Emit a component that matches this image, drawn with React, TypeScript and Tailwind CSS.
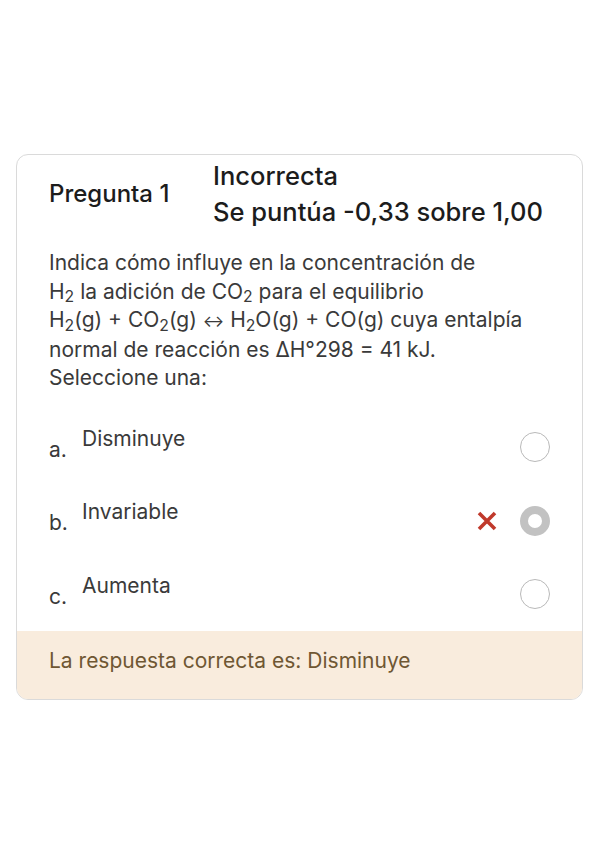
const font = { fontFamily: 'Inter, "Noto Sans", sans-serif' }

function Radio({ checked }: { readonly checked?: boolean }) {
  if (checked) {
    return <span className="block h-[30px] w-[30px] rounded-full border-[8px] border-[#c2c2c2] bg-white" />
  }
  return <span className="block h-[30px] w-[30px] rounded-full border-[1.5px] border-[#b9b9b9] bg-white" />
}

function WrongMark() {
  return (
    <svg width="22" height="22" viewBox="0 0 22 22" className="text-[#c0392b]">
      <path d="M3 3 L19 19 M19 3 L3 19" stroke="currentColor" strokeWidth="3.6" strokeLinecap="butt" />
    </svg>
  )
}

const options = [
  { letter: 'a.', label: 'Disminuye' },
  { letter: 'b.', label: 'Invariable', picked: true },
  { letter: 'c.', label: 'Aumenta' },
]

export default function App() {
  return (
    <div className="min-h-[848px] bg-white pt-[154px]" style={font}>
      <div className="mx-4 overflow-hidden rounded-xl border border-[#dadada] bg-white">
        {/* Header */}
        <div className="flex items-center px-8 pt-[3px]">
          <div className="w-[164px] text-[24px] font-medium text-[#1c1c1c]">Pregunta 1</div>
          <div className="text-[25.5px] font-medium leading-[36px] text-[#1c1c1c]">
            <div>Incorrecta</div>
            <div>Se puntúa -0,33 sobre 1,00</div>
          </div>
        </div>

        {/* Question */}
        <div className="mt-[19px] px-8 text-[21px] leading-[28.5px] text-[#3a3a3a]">
          <p>
            Indica cómo influye en la concentración de
            <br />
            H<sub>2</sub> la adición de CO<sub>2</sub> para el equilibrio
            <br />
            H<sub>2</sub>(g) + CO<sub>2</sub>(g) <span className="text-[16px]">↔</span> H<sub>2</sub>O(g) + CO(g) cuya
            entalpía
            <br />
            normal de reacción es ΔH°298 = 41 kJ.
          </p>
          <p>Seleccione una:</p>
        </div>

        {/* Answers */}
        <div className="mt-[18px] px-8">
          {options.map((o) => (
            <div key={o.letter} className="flex h-[73.5px] items-center text-[21px] leading-[29px] text-[#3a3a3a]">
              <span className="w-[33px] pt-[4px]">{o.letter}</span>
              <span className="flex-1 pb-[18px]">{o.label}</span>
              {o.picked && (
                <span className="mr-[22px]">
                  <WrongMark />
                </span>
              )}
              <Radio checked={o.picked} />
            </div>
          ))}
        </div>

        {/* Feedback */}
        <div className="bg-[#f9ecdd] px-8 pt-[15px] pb-[24px] text-[21px] leading-[29px] text-[#6f5733]">
          La respuesta correcta es: Disminuye
        </div>
      </div>
    </div>
  )
}
